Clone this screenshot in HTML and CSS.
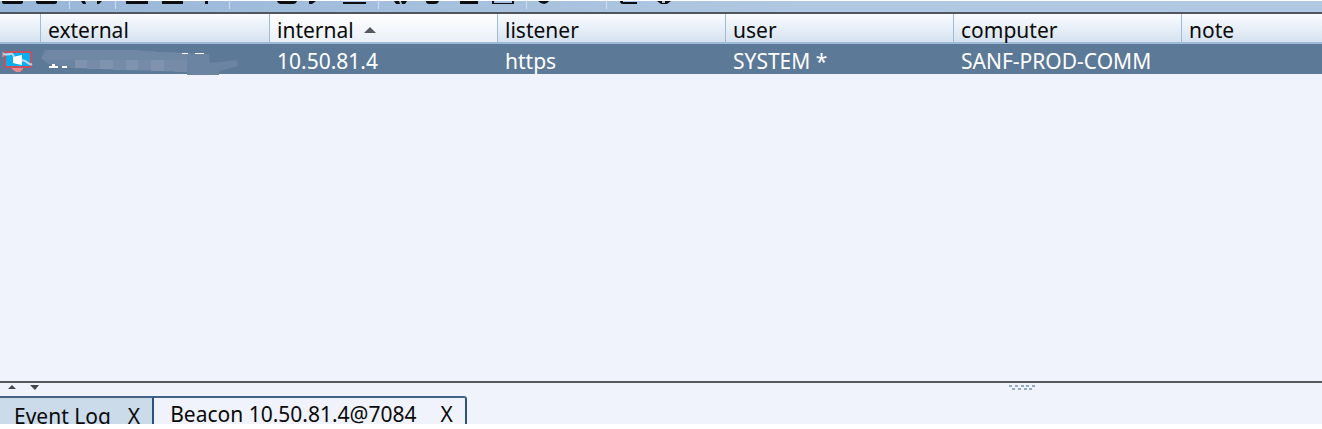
FILE: index.html
```html
<!DOCTYPE html>
<html lang="en">
<head>
<meta charset="utf-8">
<title>Sessions</title>
<link rel="stylesheet" href="styles.css">
</head>
<body>
<main class="app">
  <header class="toolbar">
    <svg class="tools" width="700" height="11" aria-hidden="true">
      <g fill="#0b0d10">
        <path d="M2 0h21v1q0 2-2 2H4q-2 0-2-2zM36 0h21v1q0 2-2 2H38q-2 0-2-2zM81 0h4l1 3h-3zM97 0h5l-3 3h-2zM126 0h22v3h-22zM162 0h21v3h-21zM205 0h3v3h-3zM277 0h20q-1 3-4 3h-12q-3 0-4-3zM309 0h7l-4 3h-3zM343 1h23v2h-23zM394 0h5l1 3h-4zM401 0h6l-2 3h-3zM426 0h13q-1 3-4 3h-6q-3 0-3-3zM460 0h18v3h-18zM492 0h2v2h18v-2h2v3h-22zM538 0h11q-2 3-5 3t-6-3zM620 0h3v1h14v2h-14q-3 0-3-3zM657 0h5v2h3v-2h6l-4 3h-6z"/>
      </g>
      <g fill="#cfe0f2"><path d="M69 0h1v8h-1zM115 0h1v8h-1zM229 0h1v8h-1zM378 0h1v8h-1zM526 0h1v8h-1zM606 0h1v8h-1z"/></g>
    </svg>
  </header>
  <section class="sessions">
    <table class="grid">
      <colgroup><col class="c-icon"><col class="c-first"><col class="c-std"><col class="c-std"><col class="c-std"><col class="c-std"><col></colgroup>
      <thead>
        <tr><th aria-label="status"></th><th>external</th><th class="sorted">internal<svg class="sort" width="12" height="6" aria-hidden="true"><path d="M6 0l6 6H0z" fill="#555a5e"/></svg></th><th>listener</th><th>user</th><th>computer</th><th>note</th></tr>
      </thead>
      <tbody>
        <tr>
          <td class="icon-cell"><svg class="host" width="32" height="24" viewBox="0 0 32 24" role="img" aria-label="Windows host"><path d="M11 18h11v3l-3 3h-4l-4-3z" fill="#e7888d"/><rect x="4" y="4" width="26" height="15" rx="1" fill="#08aeee" stroke="#c8505c" stroke-width="2"/><path d="M12 9l4-1v4h-4zM16 8l5-1v5h-5zM12 12h4v4l-4-1zM16 12h5v5l-5-1z" fill="#fff"/><path d="M2 6q4 1 7 0t4 3M21 12q4 1 6 3t4 1" fill="none" stroke="#b9d8e9" stroke-width="2"/><path d="M2 4v5M30 15v3" fill="none" stroke="#e0a8b4" stroke-width="1"/></svg></td>
          <td class="redacted"><svg class="smudge" width="200" height="32" aria-hidden="true"><path d="M5 6H95L120 8L169 10L170 19L197 16L198 22L179 27V31H147V28L78 26L30 24L8 20L1 14z" fill="#6b84a2"/><path d="M35 16h12v8H35zM60 16h13v9H60zM86 16h12v10H86zM111 16h13v11h-13z" fill="#8093ae"/><path d="M47 16h13v9H47zM73 16h13v10H73zM98 16h13v10H98zM124 16h11v11h-11zM135 16h12v12h-12z" fill="#758ba8"/><path d="M8 6h87l25 2 27 1v7H4l-3-2z" fill="#7188a5"/><path d="M9 22h3v-2h3v2h3v2H9zM22 22h5v2h-5zM142 9h6v1h-6zM155 9h9v1h-9z" fill="#fff"/></svg></td>
          <td>10.50.81.4</td><td>https</td><td>SYSTEM *</td><td>SANF-PROD-COMM</td><td></td>
        </tr>
      </tbody>
    </table>
  </section>
  <div class="splitter">
    <svg class="arrows" width="32" height="5" aria-hidden="true"><path d="M4 0l4 4H0zM22 0h9l-4 5z" fill="#44484d"/></svg>
    <svg class="grip" width="26" height="5" aria-hidden="true"><path d="M0 0h3v2H0zM6 0h3v2H6zM12 0h3v2h-3zM17 0h3v2h-3zM23 0h3v2h-3zM3 3h3v2H3zM9 3h3v2H9zM15 3h3v2h-3zM20 3h3v2h-3z" fill="#92aac3"/></svg>
  </div>
  <nav class="tabs">
    <div class="tab"><button class="name">Event Log</button><button class="close" aria-label="Close Event Log">X</button></div>
    <div class="tab active"><button class="name">Beacon 10.50.81.4@7084</button><button class="close" aria-label="Close Beacon">X</button></div>
  </nav>
</main>
</body>
</html>
```
FILE: styles.css
```css
* { box-sizing: border-box; }
body {
  margin: 0;
  background: #fff;
  color: #0a0a0a;
  font: 21px/28px "Noto Sans", "Open Sans", sans-serif;
}
.app {
  display: flex;
  flex-direction: column;
  height: 100vh;
  padding: 1px 0 5px;
}
.toolbar {
  flex: none;
  height: 13px;
  overflow: hidden;
  background: linear-gradient(90deg, #98b6d9, #b0c8e1 60%);
  border-bottom: 2px solid #50565e;
}
.tools { display: block; }
.sessions {
  flex: 1;
  overflow: hidden;
  background: #f0f3fb;
}
.grid {
  width: 100%;
  table-layout: fixed;
  border-collapse: separate;
  border-spacing: 0;
}
.c-icon { width: 40px; }
.c-first { width: 229px; }
.c-std { width: 228px; }
.grid th, .grid td {
  height: 30px;
  padding: 4px 0 0 7px;
  font-weight: 400;
  line-height: 24px;
  text-align: left;
  white-space: nowrap;
}
.grid th {
  padding-top: 3px;
  background: linear-gradient(#fafcff, #d6e2f0);
  border-left: 1px solid #9dbcdb;
  border-bottom: 2px solid #9dbbd6;
}
.grid th:first-child { border-left: 0; }
.grid th.sorted { background: linear-gradient(#ffffff, #eaf0f8); }
.sort { margin-left: 10px; vertical-align: 5px; }
.grid td {
  padding-left: 8px;
  background: #5c7998;
  color: #fff;
}
.grid td.icon-cell { padding: 2px 0 0 1px; }
.grid td.redacted { height: 30px; padding: 0; line-height: 0; vertical-align: top; }
.host { display: block; }
.smudge { display: block; margin-bottom: -2px; }
.splitter {
  flex: none;
  position: relative;
  height: 15px;
  padding: 2px 8px;
  background: #f0f3fb;
  border-top: 2px solid #555a5e;
}
.arrows, .grip { display: block; }
.grip {
  position: absolute;
  top: 2px;
  right: 287px;
}
.tabs {
  flex: none;
  display: flex;
  height: 28px;
  overflow: hidden;
  background: #f0f3fb;
}
.tab {
  display: flex;
  gap: 17px;
  height: 40px;
  padding: 4px 12px 0 14px;
  background: #ccdbea;
  border-top: 2px solid #416385;
  border-right: 2px solid #2f5377;
}
.tab.active {
  gap: 24px;
  padding: 2px 12px 0 16px;
  background: #f0f3fb;
  border-top-right-radius: 3px;
}
.tab button {
  height: 28px;
  padding: 0;
  border: 0;
  background: none;
  color: inherit;
  font: inherit;
}
```
